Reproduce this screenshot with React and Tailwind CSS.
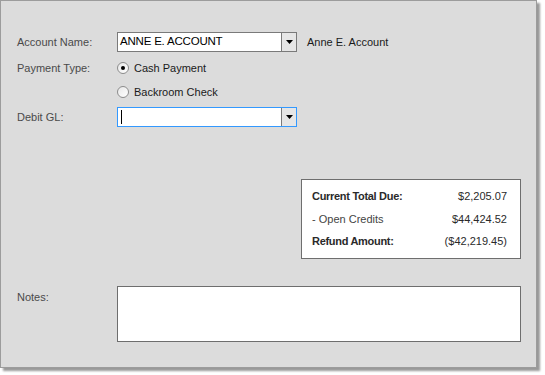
import React from 'react';

function DropArrow() {
    return (
        <div className="flex w-[15px] items-center justify-center border-l border-[#7a7a7a] bg-[#e6e6e6]">
            <svg width="7" height="4" viewBox="0 0 7 4"><path d="M0 0h7L3.5 4z" fill="#000" /></svg>
        </div>
    );
}

function Combo({ value, focused }) {
    return (
        <div className={`flex h-[20px] w-[180px] border bg-white ${focused ? 'border-[#3399ff]' : 'border-[#7a7a7a]'}`}>
            <div className="flex flex-1 items-center pl-[2px] text-[11.5px] tracking-[-0.2px] text-black">
                {focused ? <span className="ml-[1px] h-[14px] w-[1px] bg-black" /> : value}
            </div>
            <DropArrow />
        </div>
    );
}

function Radio({ checked, label }) {
    return (
        <div className="flex h-[20px] items-center gap-[5px]">
            <span className="flex h-[12px] w-[12px] items-center justify-center rounded-full border border-[#8c8c8c] bg-gradient-to-br from-[#e8e8e8] to-white">
                {checked && <span className="h-[4px] w-[4px] rounded-full bg-black" />}
            </span>
            <span className="text-[11px] text-[#1a1a1a]">{label}</span>
        </div>
    );
}

function Row({ label, children, className = '' }) {
    return (
        <div className={`flex ${className}`}>
            <div className="w-[100px] text-[11px] leading-[20px] text-[#4a4a4a]">{label}</div>
            {children}
        </div>
    );
}

export default function App() {
    return (
        <div className="h-[375px] w-[545px] bg-white" style={{ fontFamily: '"Liberation Sans", Arial, sans-serif' }}>
            <div className="flex h-[368px] w-[537px] flex-col border border-[#9c9c9c] bg-[#dcdcdc] pl-[16px] pr-[15px] pt-[31px] shadow-[3px_3px_2px_rgba(0,0,0,0.4)]">
                <Row label="Account Name:">
                    <Combo value="ANNE E. ACCOUNT" />
                    <span className="ml-[10px] text-[11px] leading-[20px] text-[#1a1a1a]">Anne E. Account</span>
                </Row>
                <Row label="Payment Type:" className="mt-[6px]">
                    <div className="flex flex-col gap-[3px]">
                        <Radio checked label="Cash Payment" />
                        <div className="mt-[1px]"><Radio label="Backroom Check" /></div>
                    </div>
                </Row>
                <Row label="Debit GL:" className="mt-[5px]">
                    <Combo focused />
                </Row>

                <div className="mt-[52px] flex justify-end">
                    <div className="flex h-[80px] w-[220px] flex-col justify-center gap-[6px] border border-[#6e6e6e] bg-white pl-[10px] pr-[13px] text-[11px] text-[#2a2a2a]">
                        <div className="flex justify-between font-bold tracking-[-0.3px]">
                            <span>Current Total Due:</span><span className="font-normal tracking-normal">$2,205.07</span>
                        </div>
                        <div className="flex justify-between text-[#444]">
                            <span>- Open Credits</span><span className="text-[#2a2a2a]">$44,424.52</span>
                        </div>
                        <div className="flex justify-between font-bold tracking-[-0.3px]">
                            <span>Refund Amount:</span><span className="font-normal tracking-normal">($42,219.45)</span>
                        </div>
                    </div>
                </div>

                <Row label="Notes:" className="mt-[28px]">
                    <div className="-mt-[1px] h-[56px] flex-1 border border-[#6e6e6e] bg-white" />
                </Row>
            </div>
        </div>
    );
}
